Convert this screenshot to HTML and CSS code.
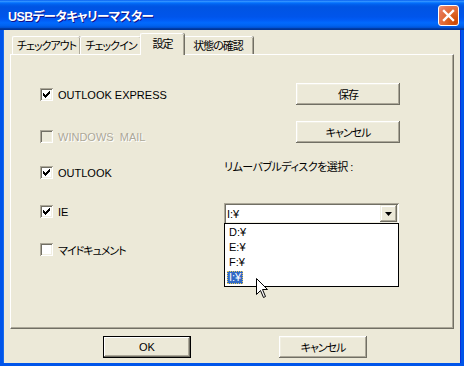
FILE: index.html
```html
<!DOCTYPE html>
<html lang="ja">
<head>
  <meta charset="UTF-8" />
  <title>USBデータキャリーマスター</title>
  <link rel="stylesheet" href="styles.css">
</head>
<body>
  <div class="window">
    <div class="titlebar">
      <span class="title">USBデータキャリーマスター</span>
      <button class="close-btn" aria-label="閉じる">
        <svg width="13" height="13" viewBox="0 0 13 13">
          <path d="M2 2 L11 11 M11 2 L2 11" stroke="#fff" stroke-width="2.4" stroke-linecap="square" />
        </svg>
      </button>
    </div>

    <div class="client">
      <div class="tabs">
        <div class="tab t-out">チェックアウト</div>
        <div class="tab t-in">チェックイン</div>
        <div class="tab t-set selected">設定</div>
        <div class="tab t-state">状態の確認</div>
      </div>

      <div class="panel">
        <div class="col-left">
          <label class="check row1"><span class="box on"></span>OUTLOOK EXPRESS</label>
          <label class="check row2 disabled"><span class="box"></span>WINDOWS&nbsp; MAIL</label>
          <label class="check row3"><span class="box on"></span>OUTLOOK</label>
          <label class="check row4"><span class="box on"></span>IE</label>
          <label class="check ja"><span class="box"></span>マイドキュメント</label>
        </div>

        <div class="col-right">
          <button class="btn side-btn ja">保存</button>
          <button class="btn side-btn gap ja">キャンセル</button>
          <div class="drive-label">リムーバブルディスクを選択 :</div>
          <div class="combo">
            <span class="combo-value">I:¥</span>
            <span class="combo-arrow">
              <svg width="7" height="4" viewBox="0 0 7 4"><path d="M0 0 H7 L3.5 4 Z" fill="#000" /></svg>
            </span>
            <ul class="drop-list">
              <li><span>D:¥</span></li>
              <li><span>E:¥</span></li>
              <li><span>F:¥</span></li>
              <li class="active"><span>I:¥</span></li>
            </ul>
          </div>
        </div>
      </div>

      <div class="footer-btns">
        <button class="btn default">OK</button>
        <button class="btn ja">キャンセル</button>
      </div>
    </div>

    <!-- mouse pointer -->
    <svg class="pointer" width="13" height="21" viewBox="0 0 13 21">
      <path d="M0.5 0.5 V16.5 L4.5 12.5 L7.5 19.5 L9.5 18.5 L6.5 11.5 H11.5 Z" fill="#fff" stroke="#000" stroke-width="1" />
    </svg>
  </div>
</body>
</html>
```

FILE: styles.css
```css
body {
  margin: 0;
  background: #fff;
  font-family: "Liberation Sans", "Noto Sans CJK JP", sans-serif;
  font-size: 11px;
  font-feature-settings: "palt";
  color: #000;
}

.ja { letter-spacing: -1px; }

.window {
  position: relative;
  width: 464px;
  height: 366px;
  display: flex;
  flex-direction: column;
}

/* Title bar */
.titlebar {
  height: 30px;
  display: flex;
  align-items: center;
  justify-content: space-between;
  padding: 0 5px 0 8px;
  box-sizing: border-box;
  background: linear-gradient(to bottom, #0058ee 0%, #3593ff 4%, #288eff 6%, #127dff 8%, #036ffc 10%, #0262ee 14%, #0057e5 20%, #0054e3 24%, #0055eb 56%, #005bf5 66%, #026afe 76%, #0062ef 86%, #0052d6 92%, #0040ab 94%, #003092 100%);
}

.title {
  color: #fff;
  font-weight: bold;
  font-size: 12.5px;
  letter-spacing: -0.6px;
  text-shadow: 1px 1px #0f1089;
  padding-top: 1px;
}

.close-btn {
  width: 21px;
  height: 21px;
  padding: 0;
  margin-top: 1px;
  border: 1px solid #fff;
  border-radius: 3px;
  background: radial-gradient(circle at 85% 85%, #cc4600 0%, #dc6527 40%, #e8795a 80%, #f09d80 100%);
  display: flex;
  align-items: center;
  justify-content: center;
}

/* Client area */
.client {
  flex: 1;
  background: #ece9d8;
  border: 3px solid #0055ea;
  border-top: none;
  box-shadow: inset 1px 0 #166aee, inset -1px 0 #0831d9;
  padding: 3px 7px 0 7px;
  display: flex;
  flex-direction: column;
}

/* Tabs */
.tabs {
  display: flex;
  align-items: flex-end;
  height: 21px;
  padding-left: 2px;
  position: relative;
  z-index: 1;
}

.tab {
  height: 18px;
  line-height: 18px;
  text-align: center;
  letter-spacing: -1px;
  border-top: 1px solid #fff;
  border-left: 1px solid #fff;
  border-top-left-radius: 2px;
  border-top-right-radius: 2px;
  box-shadow: inset -1px 0 #aca899, 1px 0 #716f64;
  box-sizing: border-box;
  white-space: nowrap;
}

.t-out { width: 68px; }
.t-in { width: 61px; }
.t-set { width: 44px; }
.t-state { width: 71px; }

.tab.selected {
  height: 22px;
  line-height: 20px;
  margin: 0 -2px -1px -1px;
  background: #ece9d8;
  position: relative;
  z-index: 2;
}

.panel {
  height: 275px;
  box-sizing: border-box;
  border-top: 1px solid #fff;
  border-left: 1px solid #fff;
  border-right: 1px solid #716f64;
  border-bottom: 1px solid #716f64;
  box-shadow: inset -1px -1px #aca899;
  display: flex;
  align-items: flex-start;
  position: relative;
}

.col-left {
  width: 184px;
  padding: 33px 0 0 29px;
  display: flex;
  flex-direction: column;
}

.check {
  display: flex;
  align-items: center;
  gap: 5px;
  height: 13px;
  white-space: nowrap;
}

.check.row1 { margin-bottom: 29px; }
.check.row2 { margin-bottom: 23px; }
.check.row3 { margin-bottom: 26px; }
.check.row4 { margin-bottom: 25px; }

.check.disabled { color: #aca899; text-shadow: 1px 1px #fff; }

.box {
  width: 13px;
  height: 13px;
  flex: none;
  background: #fff;
  box-shadow: inset 1px 1px #aca899, inset -1px -1px #fff, inset 2px 2px #716f64, inset -2px -2px #f1efe2;
  position: relative;
}

.disabled .box { background: #ece9d8; }

.box.on::after {
  content: "";
  position: absolute;
  left: 3px;
  top: 3px;
  width: 7px;
  height: 7px;
  background: url("data:image/svg+xml,%3Csvg xmlns='http://www.w3.org/2000/svg' width='7' height='7'%3E%3Cpath d='M0 2h1v1h1v1h1v-1h1v-1h1v-1h1v-1h1v3h-1v1h-1v1h-1v1h-1v1h-1v-1h-1v-1h-1v-1h-1z' fill='%23000'/%3E%3C/svg%3E");
}

/* Right column */
.col-right {
  width: 175px;
  padding-top: 28px;
  display: flex;
  flex-direction: column;
  align-items: flex-start;
}

.btn {
  height: 22px;
  width: 88px;
  padding: 0;
  border: none;
  background: #ece9d8;
  font: inherit;
  color: #000;
  box-shadow: inset -1px -1px #716f64, inset 1px 1px #fff, inset -2px -2px #aca899, inset 2px 2px #f1efe2;
}

.btn.ja { letter-spacing: -1px; }

.side-btn {
  width: 104px;
  margin-left: 72px;
}

.side-btn.gap { margin-top: 16px; }

.drive-label {
  margin-top: 17px;
  height: 14px;
  line-height: 14px;
  letter-spacing: -0.5px;
  white-space: nowrap;
}

.combo {
  margin-top: 29px;
  width: 175px;
  height: 21px;
  box-sizing: border-box;
  background: #fff;
  box-shadow: inset 1px 1px #aca899, inset -1px -1px #fff, inset 2px 2px #716f64, inset -2px -2px #f1efe2;
  display: flex;
  align-items: center;
  justify-content: space-between;
  padding: 2px;
  position: relative;
}

.combo-value { padding-left: 1px; }

.combo-arrow {
  width: 17px;
  height: 17px;
  background: #ece9d8;
  box-shadow: inset -1px -1px #716f64, inset 1px 1px #f1efe2, inset -2px -2px #aca899, inset 2px 2px #fff;
  display: flex;
  align-items: center;
  justify-content: center;
}

.drop-list {
  position: absolute;
  left: 0;
  top: 20px;
  width: 175px;
  box-sizing: border-box;
  margin: 0;
  padding: 1px 0 1px 2px;
  list-style: none;
  background: #fff;
  border: 1px solid #000;
  z-index: 5;
}

.drop-list li {
  height: 15px;
  line-height: 15px;
}

.drop-list li span { padding: 0 2px; display: inline-block; line-height: 13px; }

.drop-list li.active span {
  background: #316ac5;
  color: #fff;
  outline: 1px dotted #e6c85a;
  outline-offset: -1px;
}

/* Bottom buttons */
.footer-btns {
  display: flex;
  justify-content: center;
  gap: 88px;
  padding: 7px 0 0 6px;
}

.btn.default {
  box-shadow: inset 0 0 0 1px #000, inset -2px -2px #716f64, inset 2px 2px #fff, inset -3px -3px #aca899;
}

.pointer {
  position: absolute;
  left: 256px;
  top: 278px;
  z-index: 10;
}
```
